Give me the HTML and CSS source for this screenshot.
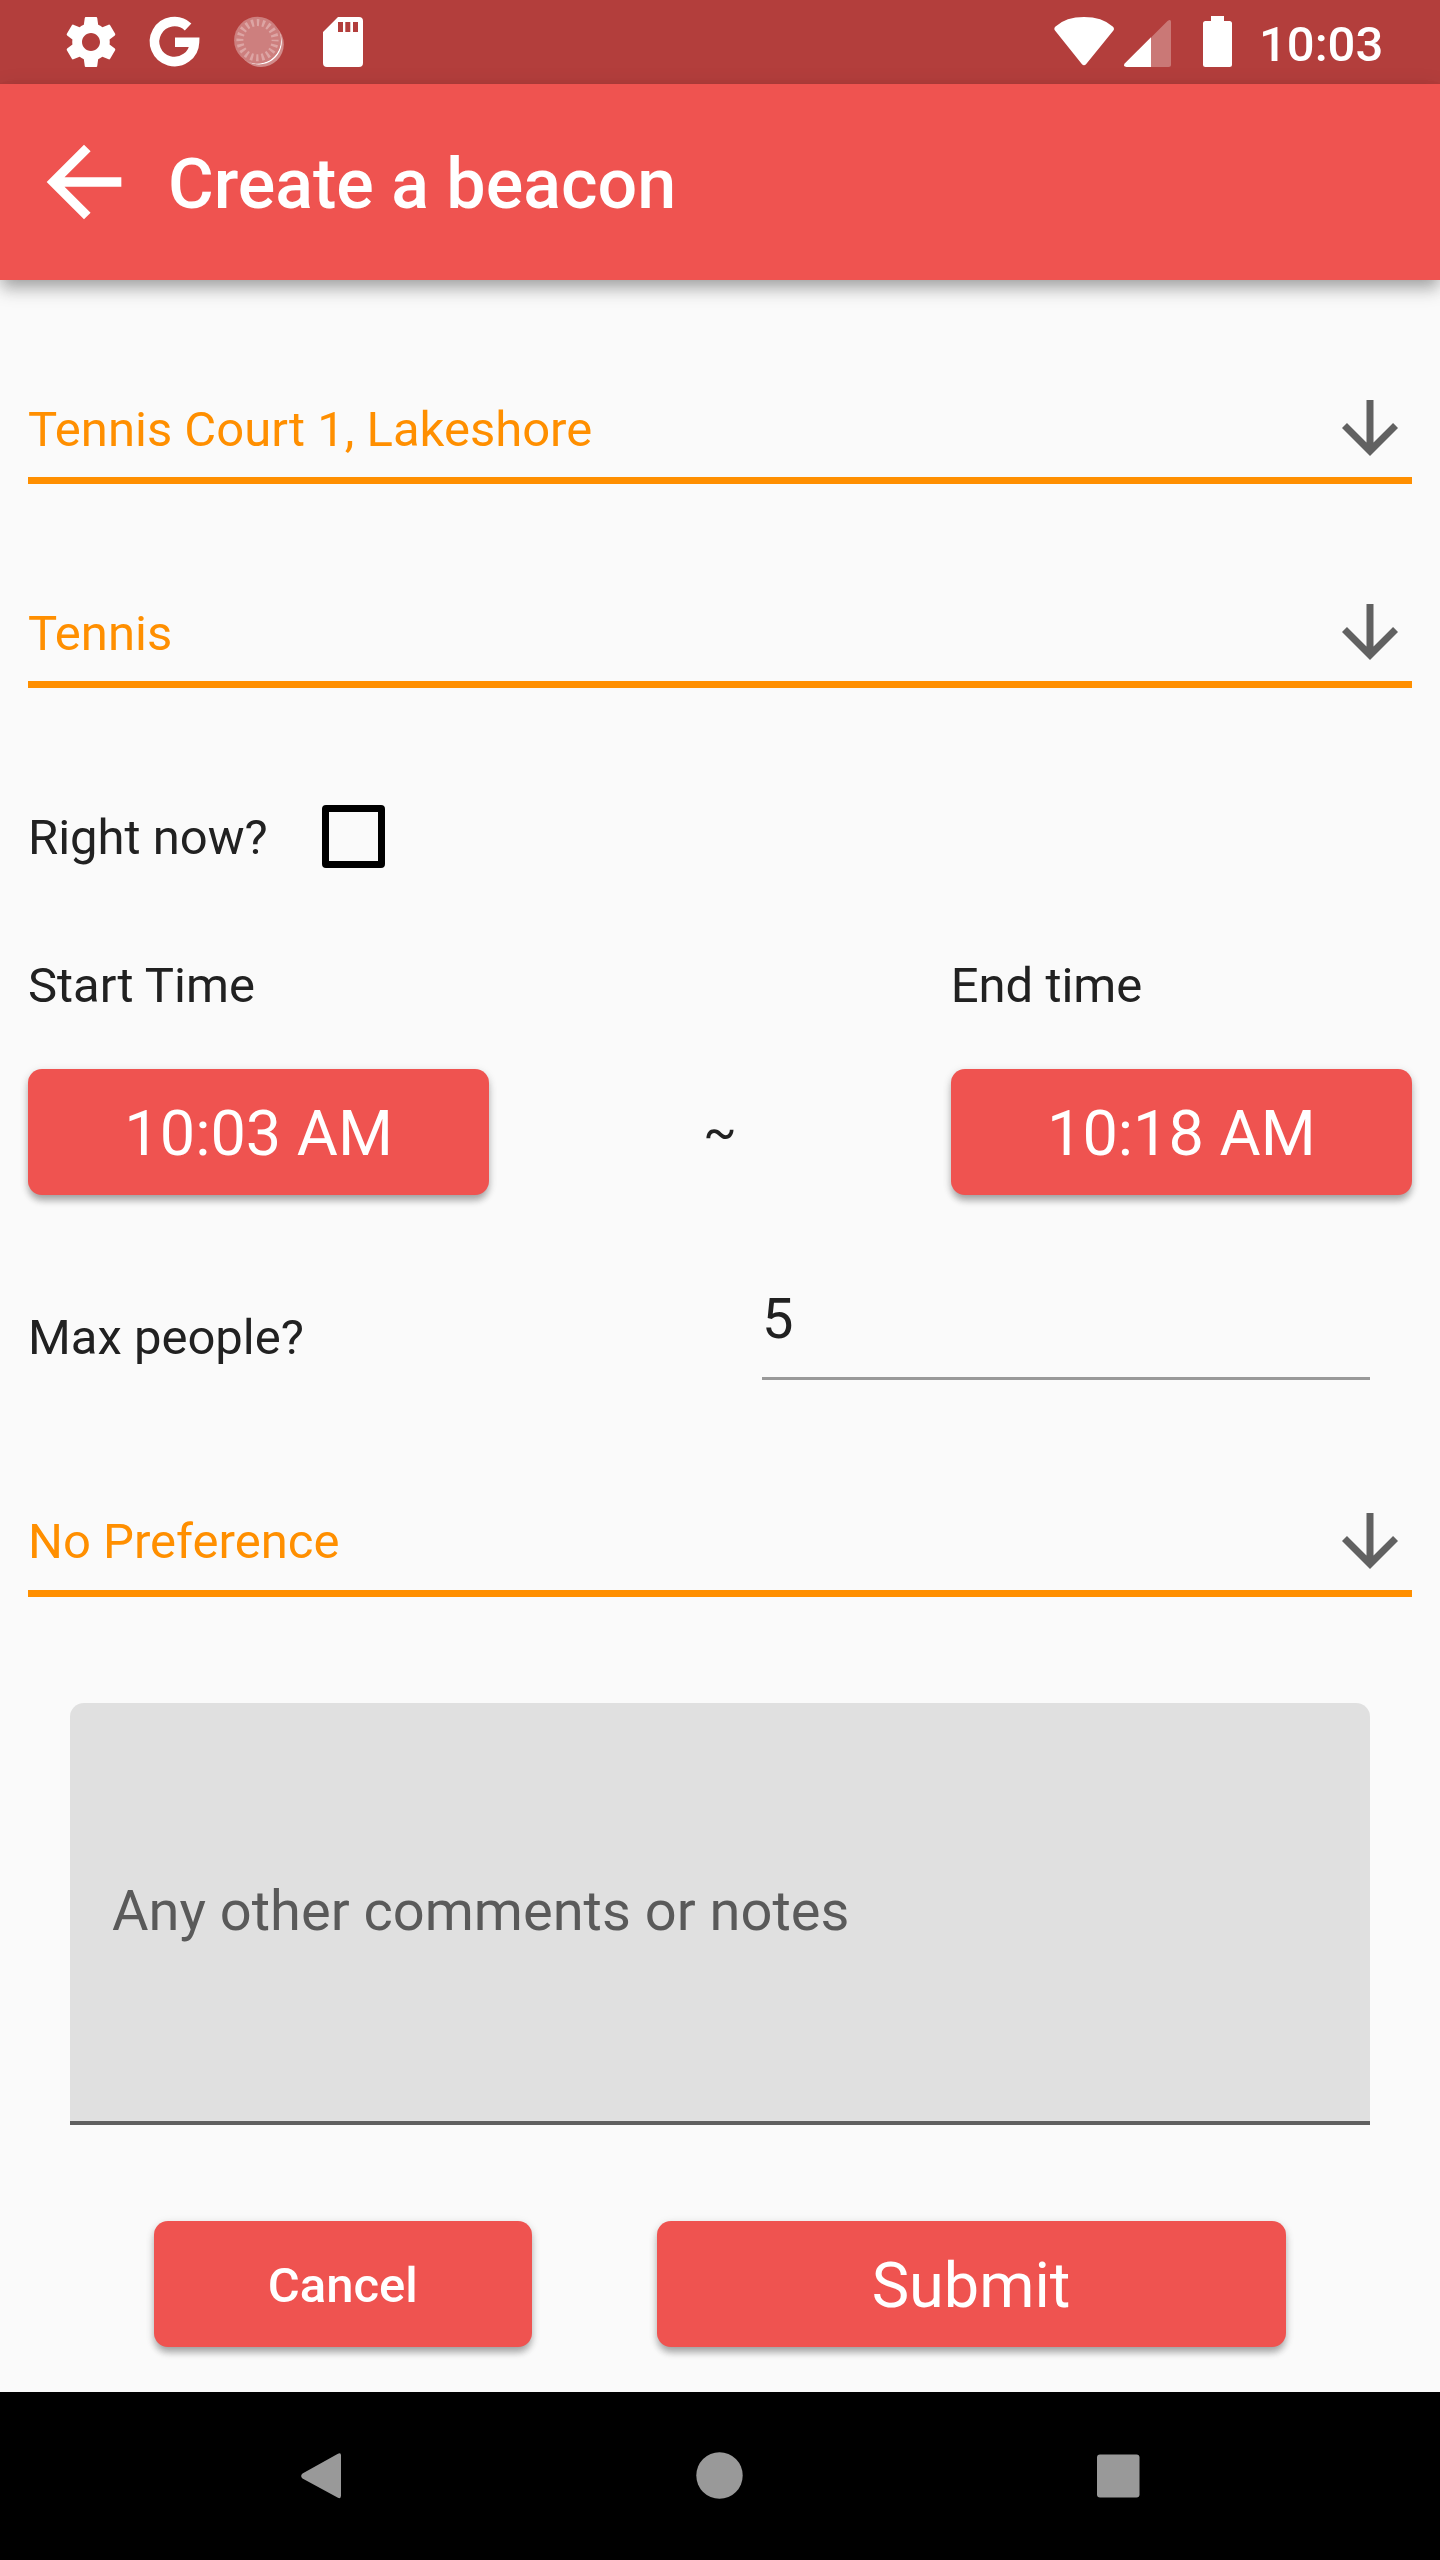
FILE: index.html
```html
<!DOCTYPE html>
<html lang="en">
<head>
<meta charset="utf-8">
<title>Create a beacon</title>
<link rel="stylesheet" href="styles.css">
</head>
<body>
<svg class="defs" width="0" height="0" aria-hidden="true">
  <symbol id="arrow-down" viewBox="0 0 24 24"><path d="M20 12l-1.41-1.41L13 16.17V4h-2v12.17l-5.58-5.59L4 12l8 8 8-8z"/></symbol>
</svg>
<div class="status-bar">
  <svg class="status-icons" width="364" height="84" viewBox="0 0 364 84" fill="#fff">
    <path transform="translate(61 12) scale(2.5)" d="M19.43 12.98c.04-.32.07-.64.07-.98s-.03-.66-.07-.98l2.11-1.65c.19-.15.24-.42.12-.64l-2-3.46c-.12-.22-.39-.3-.61-.22l-2.49 1c-.52-.4-1.08-.73-1.69-.98l-.38-2.65C14.46 2.18 14.25 2 14 2h-4c-.25 0-.46.18-.49.42l-.38 2.65c-.61.25-1.17.59-1.69.98l-2.49-1c-.23-.09-.49 0-.61.22l-2 3.46c-.13.22-.07.49.12.64l2.11 1.65c-.04.32-.07.65-.07.98s.03.66.07.98l-2.11 1.65c-.19.15-.24.42-.12.64l2 3.46c.12.22.39.3.61.22l2.49-1c.52.4 1.08.73 1.69.98l.38 2.65c.03.24.24.42.49.42h4c.25 0 .46-.18.49-.42l.38-2.65c.61-.25 1.17-.59 1.69-.98l2.49 1c.23.09.49 0 .61-.22l2-3.46c.12-.22.07-.49-.12-.64l-2.11-1.65zM12 15.6c-1.98 0-3.6-1.62-3.6-3.6s1.62-3.6 3.6-3.6 3.6 1.62 3.6 3.6-1.62 3.6-3.6 3.6z"/>
    <path d="M188.1 26.9A20 20 0 1 0 194.500 42.3H175" fill="none" stroke="#fff" stroke-width="9.6"/>
    <circle cx="261" cy="44.2" r="22.8" opacity=".4"/>
    <path d="M279 31A23.4 23.4 0 0 1 249 62A22.6 22.6 0 0 0 279 31z"/>
    <circle cx="257.5" cy="40.2" r="23.4" fill="#cd7f7e"/>
    <circle cx="257.5" cy="40.2" r="17.6" fill="none" stroke="#dda5a4" stroke-width="7" stroke-dasharray="2.4 3.129" stroke-dashoffset="1.2"/>
    <path fill-rule="evenodd" d="M338 17h21a4 4 0 0 1 4 4v42a4 4 0 0 1-4 4h-32a4 4 0 0 1-4-4V32zM338 22v10h5V22zM345.3 22v10h5V22zM353 22v10h5V22z"/>
  </svg>
  <svg class="status-icons" width="184" height="84" viewBox="1050 0 184 84" fill="#fff">
    <path d="M1055.2 30.8Q1053.3 28.6 1055.5 26.4Q1066 17 1084 17T1112.7 26.4Q1115 28.6 1113.2 30.8L1086.2 64Q1084 66.6 1081.8 64z"/>
    <path opacity=".3" d="M1151 37.5L1167.5 21Q1171 18.4 1171 22V64.5Q1171 67 1168.5 67H1151z"/>
    <path d="M1151 37.2V67H1126.500Q1122.600 66.500 1124.700 63.500z"/>
    <path d="M1211 16h13v5h5.500a2.500 2.500 0 0 1 2.500 2.500v41a2.500 2.500 0 0 1-2.500 2.500h-24a2.500 2.500 0 0 1-2.500-2.500v-41a2.500 2.500 0 0 1 2.500-2.500h5.500z"/>
  </svg>
  <span class="clock">10:03</span>
</div>
<header class="app-bar">
  <svg class="back" viewBox="0 0 24 24" fill="#fff"><path d="M20 11H7.83l5.59-5.59L12 4l-8 8 8 8 1.410-1.410L7.830 13H20v-2z"/></svg>
  <h1 class="title">Create a beacon</h1>
</header>
<main class="form">
  <div class="select"><span class="value">Tennis Court 1, Lakeshore</span><svg class="chevron"><use href="#arrow-down"/></svg></div>
  <div class="select"><span class="value">Tennis</span><svg class="chevron"><use href="#arrow-down"/></svg></div>
  <div class="now-row"><span class="label">Right now?</span><span class="checkbox"></span></div>
  <div class="times">
    <span class="label">Start Time</span><span></span><span class="label">End time</span>
    <button class="btn large">10:03 AM</button><span class="tilde">~</span><button class="btn large">10:18 AM</button>
  </div>
  <div class="people-row"><span class="label">Max people?</span><div class="number">5</div></div>
  <div class="select preference"><span class="value">No Preference</span><svg class="chevron"><use href="#arrow-down"/></svg></div>
  <div class="notes">Any other comments or notes</div>
  <div class="actions"><button class="btn cancel">Cancel</button><button class="btn large submit">Submit</button></div>
</main>
<nav class="nav-bar">
  <svg width="1440" height="168" viewBox="0 0 1440 168" fill="#999">
    <path d="M337.500 62Q341 59.800 341 63.500V103.500Q341 107.500 337.500 105.500L302.500 86.500Q299.800 84 302.500 81.500z"/>
    <circle cx="719.500" cy="83.500" r="23.200"/>
    <rect x="1097" y="62.500" width="42.500" height="43" rx="3"/>
  </svg>
</nav>
</body>
</html>
```
FILE: styles.css
```css
* { box-sizing: border-box; }
body {
  margin: 0;
  width: 1440px;
  height: 2560px;
  display: flex;
  flex-direction: column;
  background: #fafafa;
  color: #212121;
  font: 400 49px/57px Roboto, sans-serif;
  overflow: hidden;
}
svg { display: block; flex: none; }
.defs { display: none; }
.status-bar {
  height: 84px;
  display: flex;
  justify-content: space-between;
  background: #b33e3c;
}
.status-icons + .status-icons { margin-left: auto; }
.clock {
  width: 206px;
  padding: 16px 0 0 25px;
  color: #fff;
  font-weight: 500;
}
.app-bar {
  height: 196px;
  display: flex;
  align-items: center;
  gap: 28px;
  padding-left: 28px;
  background: #ef5350;
  box-shadow: 0 7px 14px -3.5px rgba(0,0,0,.2), 0 12px 16px rgba(0,0,0,.14), 0 3px 20px rgba(0,0,0,.1);
}
.back { width: 112px; height: 112px; }
.title {
  margin: 4px 0 0;
  color: #fff;
  font-size: 70px;
  line-height: 82px;
  font-weight: 500;
}
.form { flex: 1; padding: 106px 28px 0; }
.select {
  height: 98px;
  display: flex;
  justify-content: space-between;
  margin-bottom: 106px;
  border-bottom: 7px solid #ff8f00;
  color: #ff8f00;
}
.value { padding-top: 15px; }
.chevron { width: 84px; height: 84px; fill: #616161; }
.now-row { display: flex; margin-top: 116px; height: 64px; }
.now-row .label { width: 294px; padding-top: 5px; }
.checkbox {
  width: 63px;
  height: 63px;
  margin-top: 1px;
  border: 7px solid #000;
  border-radius: 4px;
}
.times {
  display: grid;
  grid-template-columns: 461.3px 1fr 461.3px;
  grid-template-rows: 57px 126px;
  row-gap: 55px;
  margin-top: 89px;
}
.tilde { text-align: center; padding-top: 35px; }
.btn {
  height: 126px;
  padding: 2px 0 0;
  border: 0;
  border-radius: 14px;
  background: #ef5350;
  color: #fff;
  font: 500 49px/57px Roboto, sans-serif;
  box-shadow: 0 7px 7px -2px rgba(0,0,0,.2), 0 5px 8px rgba(0,0,0,.14), 0 2px 10px rgba(0,0,0,.1);
}
.large { font-size: 63px; line-height: 73px; font-weight: 400; }
.people-row {
  display: flex;
  justify-content: space-between;
  margin: 91px 42px 118.500px 0;
}
.people-row .label { padding-top: 23px; }
.number {
  width: 608px;
  height: 94px;
  border-bottom: 3px solid #999;
  font-size: 56px;
  line-height: 66px;
}
.preference .value { padding-top: 14px; }
.notes {
  height: 422px;
  margin: 0 42px 96.5px;
  padding: 175px 42px 0;
  border-bottom: 4px solid #5f5f5f;
  border-radius: 14px 14px 0 0;
  background: #e0e0e0;
  color: #5a5a5a;
  font-size: 56px;
  line-height: 66px;
}
.actions { display: flex; gap: 125px; padding-left: 126px; }
.cancel { width: 377.5px; }
.submit { width: 629px; }
.nav-bar { height: 168px; background: #000; }
```
